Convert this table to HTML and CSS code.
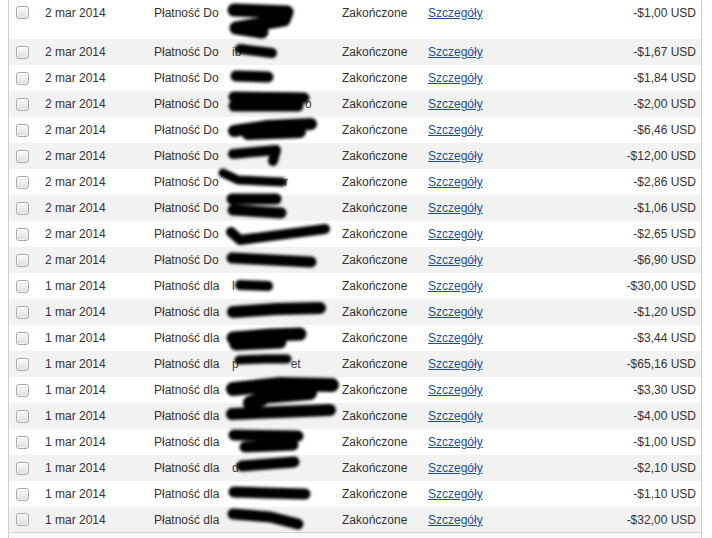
FILE: index.html
```html
<!DOCTYPE html>
<html lang="pl">
<head>
<meta charset="utf-8">
<link rel="stylesheet" href="styles.css">
</head>
<body>
<div class="list">
  <div class="row first"><span class="cb"></span><span>2 mar 2014</span><span>Płatność Do</span><span class="name"></span><span>Zakończone</span><a href="#">Szczegóły</a><span class="amt">-$1,00 USD</span></div>
  <div class="row alt"><span class="cb"></span><span>2 mar 2014</span><span>Płatność Do</span><span class="name">ib</span><span>Zakończone</span><a href="#">Szczegóły</a><span class="amt">-$1,67 USD</span></div>
  <div class="row"><span class="cb"></span><span>2 mar 2014</span><span>Płatność Do</span><span class="name"></span><span>Zakończone</span><a href="#">Szczegóły</a><span class="amt">-$1,84 USD</span></div>
  <div class="row alt"><span class="cb"></span><span>2 mar 2014</span><span>Płatność Do</span><span class="name pad-o">o</span><span>Zakończone</span><a href="#">Szczegóły</a><span class="amt">-$2,00 USD</span></div>
  <div class="row"><span class="cb"></span><span>2 mar 2014</span><span>Płatność Do</span><span class="name"></span><span>Zakończone</span><a href="#">Szczegóły</a><span class="amt">-$6,46 USD</span></div>
  <div class="row alt"><span class="cb"></span><span>2 mar 2014</span><span>Płatność Do</span><span class="name"></span><span>Zakończone</span><a href="#">Szczegóły</a><span class="amt">-$12,00 USD</span></div>
  <div class="row"><span class="cb"></span><span>2 mar 2014</span><span>Płatność Do</span><span class="name pad-r">r</span><span>Zakończone</span><a href="#">Szczegóły</a><span class="amt">-$2,86 USD</span></div>
  <div class="row alt"><span class="cb"></span><span>2 mar 2014</span><span>Płatność Do</span><span class="name"></span><span>Zakończone</span><a href="#">Szczegóły</a><span class="amt">-$1,06 USD</span></div>
  <div class="row"><span class="cb"></span><span>2 mar 2014</span><span>Płatność Do</span><span class="name"></span><span>Zakończone</span><a href="#">Szczegóły</a><span class="amt">-$2,65 USD</span></div>
  <div class="row alt"><span class="cb"></span><span>2 mar 2014</span><span>Płatność Do</span><span class="name"></span><span>Zakończone</span><a href="#">Szczegóły</a><span class="amt">-$6,90 USD</span></div>
  <div class="row"><span class="cb"></span><span>1 mar 2014</span><span>Płatność dla</span><span class="name">l</span><span>Zakończone</span><a href="#">Szczegóły</a><span class="amt">-$30,00 USD</span></div>
  <div class="row alt"><span class="cb"></span><span>1 mar 2014</span><span>Płatność dla</span><span class="name"></span><span>Zakończone</span><a href="#">Szczegóły</a><span class="amt">-$1,20 USD</span></div>
  <div class="row"><span class="cb"></span><span>1 mar 2014</span><span>Płatność dla</span><span class="name"></span><span>Zakończone</span><a href="#">Szczegóły</a><span class="amt">-$3,44 USD</span></div>
  <div class="row alt"><span class="cb"></span><span>1 mar 2014</span><span>Płatność dla</span><span class="name">p<span class="gap"></span>et</span><span>Zakończone</span><a href="#">Szczegóły</a><span class="amt">-$65,16 USD</span></div>
  <div class="row"><span class="cb"></span><span>1 mar 2014</span><span>Płatność dla</span><span class="name"></span><span>Zakończone</span><a href="#">Szczegóły</a><span class="amt">-$3,30 USD</span></div>
  <div class="row alt"><span class="cb"></span><span>1 mar 2014</span><span>Płatność dla</span><span class="name"></span><span>Zakończone</span><a href="#">Szczegóły</a><span class="amt">-$4,00 USD</span></div>
  <div class="row"><span class="cb"></span><span>1 mar 2014</span><span>Płatność dla</span><span class="name"></span><span>Zakończone</span><a href="#">Szczegóły</a><span class="amt">-$1,00 USD</span></div>
  <div class="row alt"><span class="cb"></span><span>1 mar 2014</span><span>Płatność dla</span><span class="name">d</span><span>Zakończone</span><a href="#">Szczegóły</a><span class="amt">-$2,10 USD</span></div>
  <div class="row"><span class="cb"></span><span>1 mar 2014</span><span>Płatność dla</span><span class="name"></span><span>Zakończone</span><a href="#">Szczegóły</a><span class="amt">-$1,10 USD</span></div>
  <div class="row alt last"><span class="cb"></span><span>1 mar 2014</span><span>Płatność dla</span><span class="name"></span><span>Zakończone</span><a href="#">Szczegóły</a><span class="amt">-$32,00 USD</span></div>
  <div class="foot"></div>
</div>
<svg class="redact" width="712" height="538" viewBox="0 0 712 538" xmlns="http://www.w3.org/2000/svg">
  <defs><filter id="b" x="-10%" y="-50%" width="120%" height="200%"><feGaussianBlur stdDeviation="1.8"/></filter></defs>
  <g filter="url(#b)" stroke="#000" fill="none" stroke-linecap="round" stroke-linejoin="round">
    <path d="M234 10 L287 12 L284 20 L236 28 L262 32" stroke-width="13"/>
    <path d="M240 49 L272 53" stroke-width="10"/>
    <path d="M236 76 L268 77" stroke-width="11"/>
    <path d="M234 97 L304 98 M234 106 L298 106" stroke-width="11"/>
    <path d="M234 131 L268 126 L311 124 M248 134 L300 132" stroke-width="12"/>
    <path d="M233 154 L276 150 L273 161" stroke-width="10"/>
    <path d="M223 173 L238 180 L282 182" stroke-width="9"/>
    <path d="M232 199 L276 199 M233 210 L281 213" stroke-width="11"/>
    <path d="M231 232 L240 240 L325 229" stroke-width="10"/>
    <path d="M232 258 L311 262" stroke-width="11"/>
    <path d="M240 285 L268 286" stroke-width="10"/>
    <path d="M233 312 L276 309 L320 308" stroke-width="12"/>
    <path d="M233 338 L270 335 L300 334 M236 344 L280 342" stroke-width="13"/>
    <path d="M239 360 L265 359 L287 359" stroke-width="9"/>
    <path d="M233 389 L280 384 L332 385 M262 397 L310 393 M250 403 L262 399" stroke-width="14"/>
    <path d="M232 414 L330 410" stroke-width="12"/>
    <path d="M234 435 L298 436 M245 447 L293 445" stroke-width="11"/>
    <path d="M242 466 L294 462" stroke-width="11"/>
    <path d="M234 492 L305 494" stroke-width="11"/>
    <path d="M233 514 L270 517 L298 524" stroke-width="11"/>
  </g>
</svg>
</body>
</html>
```
FILE: styles.css
```css
html, body {
  margin: 0;
  padding: 0;
  background: #fff;
}
body {
  position: relative;
  width: 712px;
  height: 538px;
  overflow: hidden;
  font-family: "Liberation Sans", Arial, sans-serif;
  font-size: 12px;
  color: #333;
}
.list {
  margin-left: 8px;
  width: 694px;
  box-sizing: border-box;
  border-left: 1px solid #cfcfcf;
  border-right: 1px solid #cfcfcf;
}
.row {
  display: grid;
  grid-template-columns: 29px 109px 74px 114px 86px 1fr auto;
  align-items: center;
  height: 26px;
  padding: 0 5px 0 7px;
  background: #fff;
  white-space: nowrap;
}
.row.first {
  height: 39px;
  padding-bottom: 14px;
  box-sizing: border-box;
}
.row.alt {
  background: #f2f2f2;
}
.row.last {
  border-bottom: 1px solid #d3d3d3;
  height: 26px;
  box-sizing: border-box;
}
.cb {
  width: 11px;
  height: 11px;
  border: 1px solid #a9a9a9;
  border-radius: 3px;
  background: linear-gradient(#fbfbfb, #dcdcdc);
  box-shadow: inset 0 0 0 1px rgba(255,255,255,0.6);
}
.name {
  color: #444;
  padding-left: 4px;
}
.name.pad-o {
  padding-left: 77px;
}
.name.pad-r {
  padding-left: 56px;
}
.gap {
  display: inline-block;
  width: 52px;
}
a {
  color: #1c4f98;
  text-decoration: underline;
}
.amt {
  text-align: right;
}
.foot {
  height: 10px;
  background: #f6f8fb;
}
.redact {
  position: absolute;
  left: 0;
  top: 0;
  pointer-events: none;
}
```
